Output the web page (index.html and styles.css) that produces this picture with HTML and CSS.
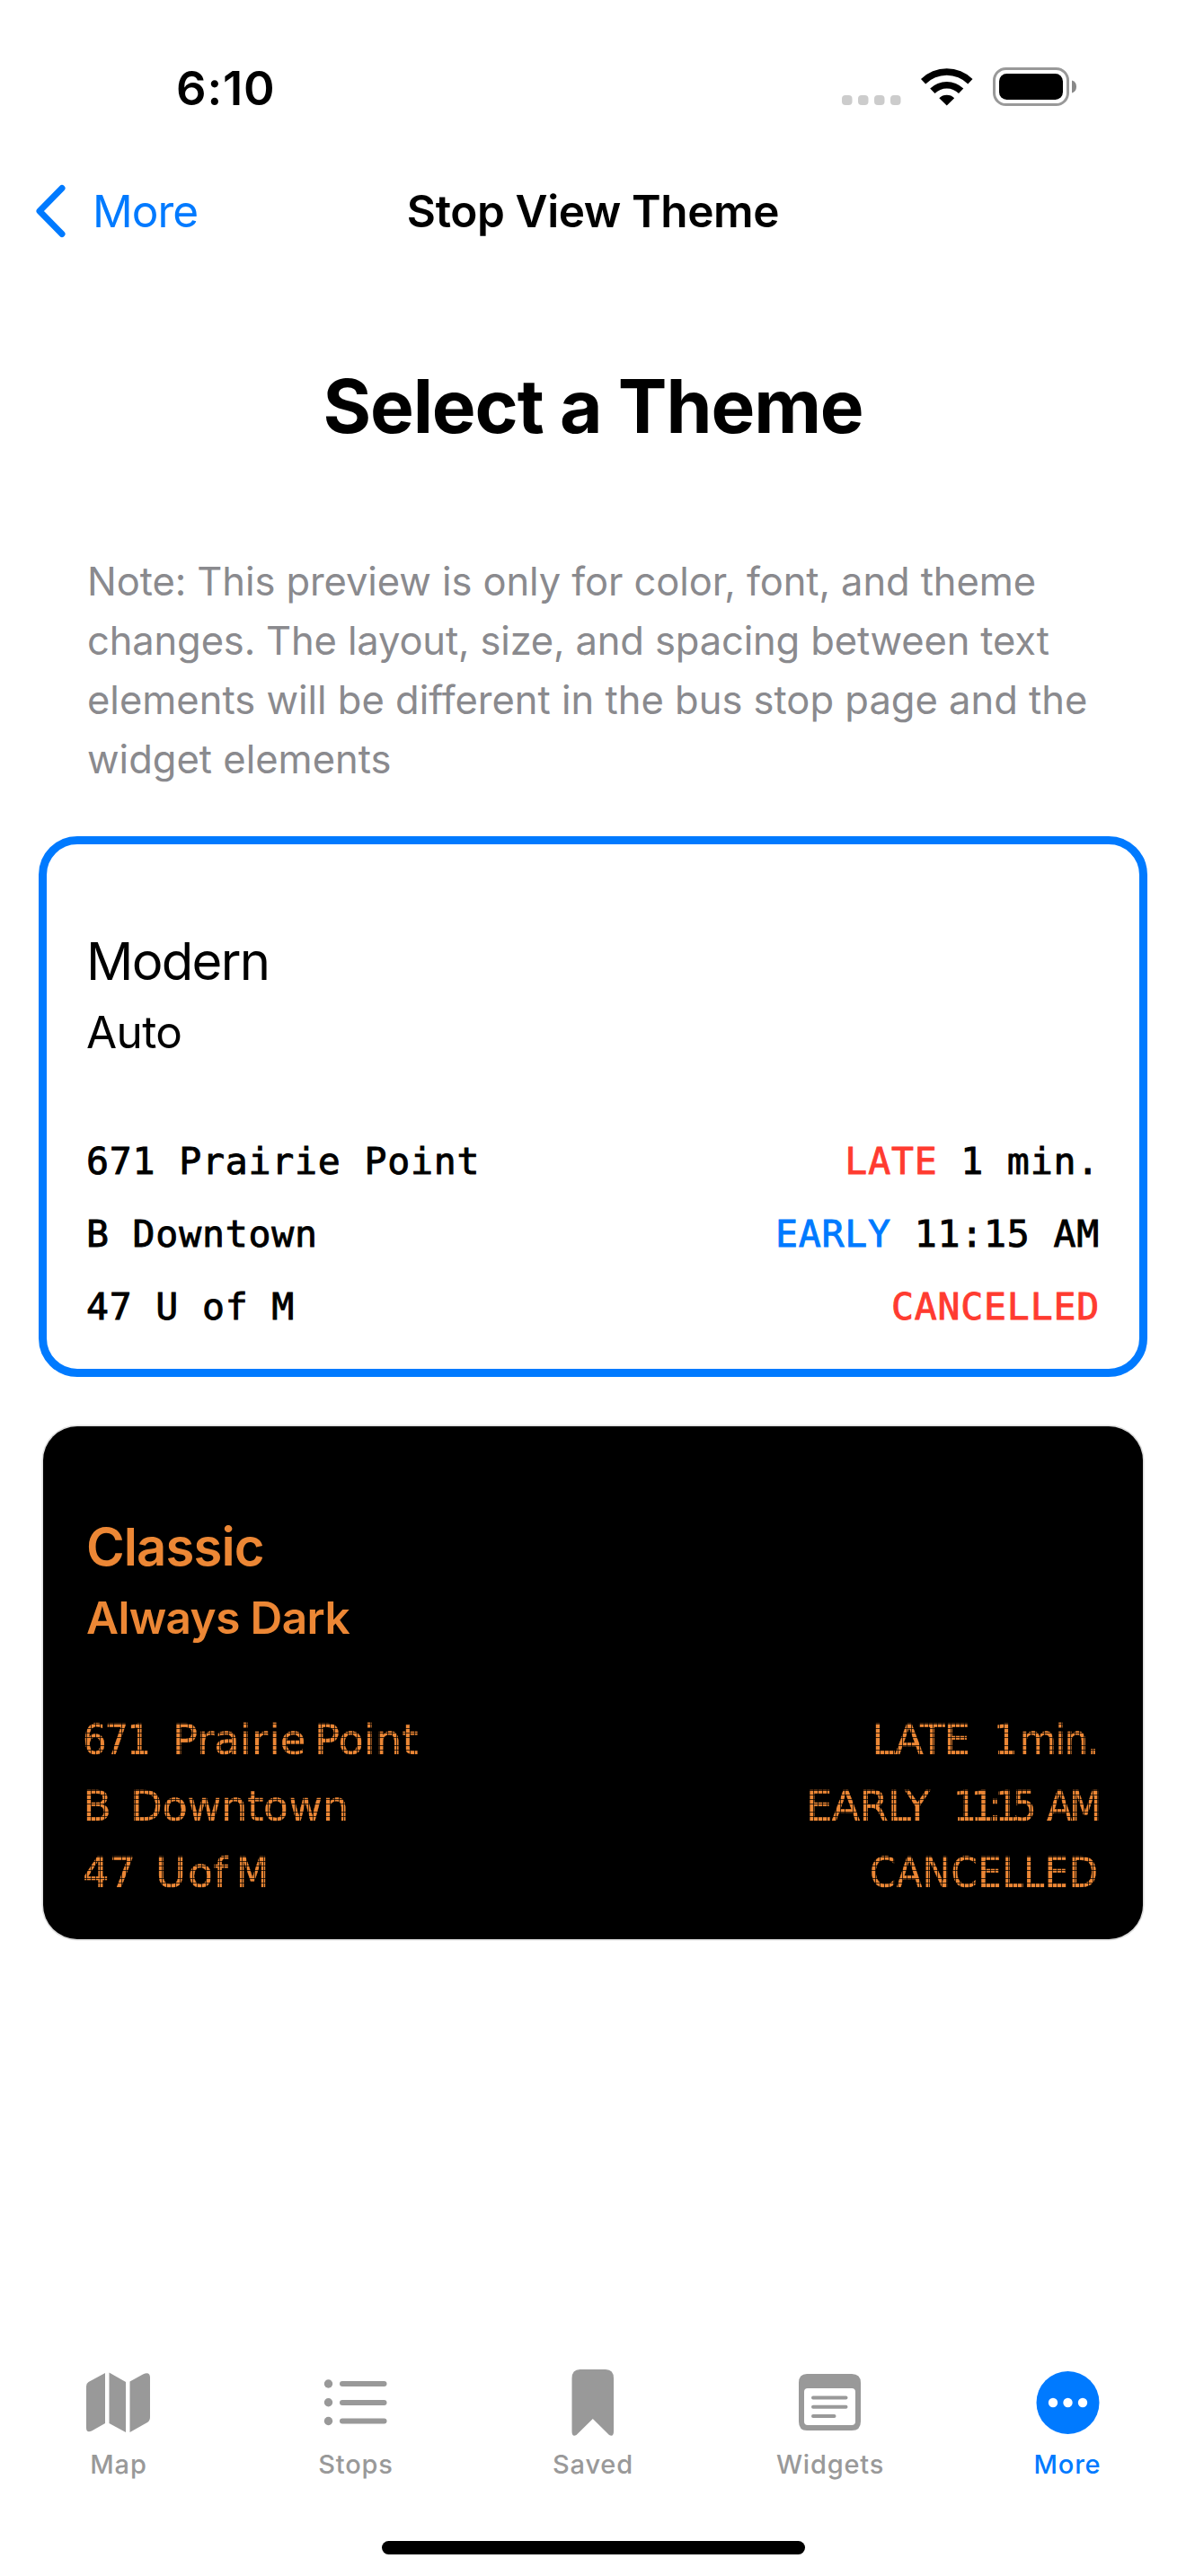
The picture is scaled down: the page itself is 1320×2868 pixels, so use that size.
FILE: index.html
```html
<!DOCTYPE html>
<html lang="en">
<head>
<meta charset="utf-8">
<title>Stop View Theme</title>
<link rel="stylesheet" href="styles.css">
</head>
<body>
<div class="screen">
  <header class="status">
    <span class="clock">6:10</span>
    <svg class="status-icons" width="264" height="48" viewBox="0 0 264 48">
      <g fill="#ccc">
        <rect x="0" y="33" width="11.5" height="11" rx="4"/><rect x="18" y="33" width="11.5" height="11" rx="4"/>
        <rect x="36" y="33" width="11.5" height="11" rx="4"/><rect x="54" y="33" width="11.5" height="11" rx="4"/>
      </g>
      <path d="M88 15A41 41 0 0 1 145.500 15L140.300 20.500A33.500 33.500 0 0 0 93.200 20.500ZM98.200 25.500A26.500 26.500 0 0 1 135.300 25.500L130 31A19 19 0 0 0 103.500 31ZM108.300 36.300A12 12 0 0 1 125.200 36.300L116.750 44.500Z"/>
      <rect x="169.500" y="3.500" width="82" height="40" rx="13" fill="none" stroke="#999" stroke-width="3"/>
      <rect x="175" y="9" width="71" height="29" rx="8.500"/>
      <path d="M256 16.500Q261 18 261 23.500Q261 29 256 30.500Z" fill="#888"/>
    </svg>
  </header>
  <nav class="navbar">
    <a class="back">
      <svg width="36" height="60" viewBox="0 0 36 60"><path d="M31 4.500L6 30L31 55.500" fill="none" stroke="#007aff" stroke-width="7" stroke-linecap="round" stroke-linejoin="round"/></svg>
      <span>More</span>
    </a>
    <h2 class="nav-title">Stop View Theme</h2>
  </nav>
  <main class="content">
    <h1 class="heading">Select a Theme</h1>
    <p class="note"><span class="snug">Note: This preview is only for color, font, and theme</span><br><span class="tight">changes. The layout, size, and spacing between text</span><br>elements will be different in the bus stop page and the<br>widget elements</p>
    <section class="card modern">
      <h3>Modern</h3>
      <h4>Auto</h4>
      <ul class="board">
        <li><span>671 Prairie Point</span><span><b class="late">LATE</b> 1 min.</span></li>
        <li><span>B Downtown</span><span><b class="early">EARLY</b> 11:15 AM</span></li>
        <li><span>47 U of M</span><span><b class="late">CANCELLED</b></span></li>
      </ul>
    </section>
    <section class="card classic">
      <h3>Classic</h3>
      <h4>Always Dark</h4>
      <ul class="led">
        <li class="row-point"><span><i class="narrow">671</i><i>Prairie</i><i>Point</i></span><span><i>LATE</i><i class="narrow">1</i><i class="narrow">min.</i></span></li>
        <li class="row-downtown"><span><i>B</i><i>Downtown</i></span><span><i>EARLY</i><i class="narrow">11:15</i><i class="narrow">AM</i></span></li>
        <li class="row-campus"><span><i>47</i><i>U</i><i>of</i><i class="narrow">M</i></span><span><i class="narrow">CANCELLED</i></span></li>
      </ul>
    </section>
  </main>
  <footer class="tabbar">
    <a class="tab"><svg width="78" height="78" viewBox="0 0 78 78"><path d="M3 19Q3 15.500 5.500 14L24 4V60L9 68.500Q3 71 3 65ZM28.500 3.500L47 14V70L28.500 60ZM51.500 13.500L66 5.500Q74 2 74 9V53Q74 57 71 59L51.500 70Z"/></svg><span>Map</span></a>
    <a class="tab"><svg width="78" height="78" viewBox="0 0 78 78"><circle cx="8.500" cy="16" r="4.700"/><circle cx="8.500" cy="36.700" r="4.700"/><circle cx="8.500" cy="57.500" r="4.700"/><rect x="21" y="13" width="52.500" height="6" rx="3"/><rect x="21" y="34" width="52.500" height="6" rx="3"/><rect x="21" y="54.500" width="52.500" height="6" rx="3"/></svg><span>Stops</span></a>
    <a class="tab"><svg width="78" height="78" viewBox="0 0 78 78"><path d="M15.500 10Q15.500 0 24.500 0H53Q62 0 62 10V69Q62 75.500 57 73L38.800 55L20.500 73Q15.500 75.500 15.500 69Z"/></svg><span>Saved</span></a>
    <a class="tab"><svg width="78" height="78" viewBox="0 0 78 78"><path fill-rule="evenodd" d="M13 5H63Q73 5 73 15V58Q73 68 63 68H13Q4 68 4 58V15Q4 5 13 5ZM14 21Q10 21 10 25V58Q10 62 14 62H63Q67 62 67 58V25Q67 21 63 21Z"/><path d="M20 31.500H56.500M20 41.700H56.500M20 52H43.500" fill="none" stroke="#999" stroke-width="4" stroke-linecap="round"/></svg><span>Widgets</span></a>
    <a class="tab active"><svg width="78" height="78" viewBox="0 0 78 78"><circle cx="39.500" cy="37" r="35"/><g fill="#fff"><circle cx="23" cy="37" r="5.200"/><circle cx="39.500" cy="37" r="5.200"/><circle cx="56" cy="37" r="5.200"/></g></svg><span>More</span></a>
  </footer>
  <div class="home"></div>
</div>
</body>
</html>
```
FILE: styles.css
```css
* { box-sizing: border-box; margin: 0; padding: 0; font-weight: inherit; font-style: normal; }
body { background: #fff; font-family: Inter, "Liberation Sans", sans-serif; color: #000; }
.screen { width: 1320px; height: 2868px; display: flex; flex-direction: column; overflow: hidden; }
.status { height: 186px; padding: 0 119px 0 196px; display: flex; justify-content: space-between; align-items: flex-start; }
.clock { font-size: 52.500px; font-weight: 600; line-height: 60px; padding-top: 68px; letter-spacing: .8px; }
.status-icons { margin-top: 73px; }
.navbar { height: 98px; display: grid; grid-template-columns: 1fr auto 1fr; align-items: center; font-size: 49.5px; }
.back { display: flex; align-items: center; gap: 29px; padding-left: 38px; color: #007aff; letter-spacing: -1px; }
.nav-title { font-size: 49.5px; font-weight: 600; letter-spacing: -.4px; }
.content { flex: 1; padding: 0 48px; }
.heading { margin-top: 117px; text-align: center; font-size: 82px; font-weight: 700; line-height: 104px; letter-spacing: -1.1px; }
.note { margin: 109px 49px 0; font-size: 43.500px; line-height: 66px; color: #8a8a8e; white-space: nowrap; }
.snug { letter-spacing: -.08px; }
.tight { letter-spacing: -.15px; }
.card { height: 592px; border-radius: 38px; padding: 95px 48px 0; }
.card h3 { font-size: 58px; line-height: 78px; }
.card h4 { font-size: 49.5px; line-height: 66px; margin-top: 7px; letter-spacing: -.6px; }
.card ul { list-style: none; }
.card li { display: flex; justify-content: space-between; }
.modern { margin-top: 58px; outline: 9px solid #007aff; outline-offset: -4.5px; }
.modern h3 { letter-spacing: -1.7px; }
.board { margin-top: 70px; font-family: "DejaVu Sans Mono", monospace; font-size: 41.5px; letter-spacing: .8px; -webkit-text-stroke: .9px; }
.board li { height: 81px; line-height: 81px; white-space: pre; }
.late { color: #ff3b30; }
.early { color: #007aff; }
.classic { height: 571px; margin-top: 60px; background: #000; color: #ec8735; box-shadow: 0 0 0 1.5px #ddd; }
.classic h3, .classic h4 { font-weight: 600; }
.classic h3 { letter-spacing: -.9px; }

/* Dot-matrix board: the lettering is masked to a grid of square dots. */
.led {
  margin: 66px -2px 0 -4px;
  font-family: "DejaVu Sans", sans-serif;
  font-size: 46.5px;
  -webkit-text-stroke: .3px;
  mask-image: repeating-linear-gradient(90deg, #000 0 4px, #0004 4px 4.9333px), repeating-linear-gradient(#000 0 4px, #0004 4px 4.9333px);
  mask-composite: intersect;
}
.led li { height: 74px; line-height: 74px; }
.led li > span { display: flex; }
.led i { display: block; white-space: nowrap; }
.led .narrow { font-family: "DejaVu Sans Condensed", "DejaVu Sans", sans-serif; font-stretch: condensed; }
.row-point > :first-child i:nth-child(1) { width: 100px; letter-spacing: -2px; }
.row-point > :first-child i:nth-child(2) { width: 158px; }
.row-point > :last-child i:nth-child(1) { width: 136px; letter-spacing: -1px; }
.row-point > :last-child i:nth-child(2) { width: 29px; }
.row-point > :last-child i:nth-child(3) { width: 91px; letter-spacing: -1.3px; }
.row-downtown > :first-child i:nth-child(1) { width: 53px; }
.row-downtown > :first-child i:nth-child(2) { letter-spacing: -.4px; }
.row-downtown > :last-child i:nth-child(1) { width: 164px; letter-spacing: -.8px; }
.row-downtown > :last-child i:nth-child(2) { width: 104px; letter-spacing: -7px; }
.row-downtown > :last-child i:nth-child(3) { width: 61px; letter-spacing: -3.500px; }
.row-campus > :first-child i:nth-child(1) { width: 81px; }
.row-campus > :first-child i:nth-child(2) { width: 36px; }
.row-campus > :first-child i:nth-child(3) { width: 54px; }
.row-campus > :last-child i { width: 258px; letter-spacing: .5px; }

.tabbar { height: 160px; display: grid; grid-template-columns: repeat(5, 264px); color: #999; fill: #999; }
.tab { display: flex; flex-direction: column; align-items: center; font-size: 29px; font-weight: 500; letter-spacing: .8px; line-height: 36px; gap: 10px; }
.tab.active { color: #007aff; fill: #007aff; }
.home { width: 471px; height: 15px; border-radius: 8px; background: #000; margin: 31px auto 24px; }
```
